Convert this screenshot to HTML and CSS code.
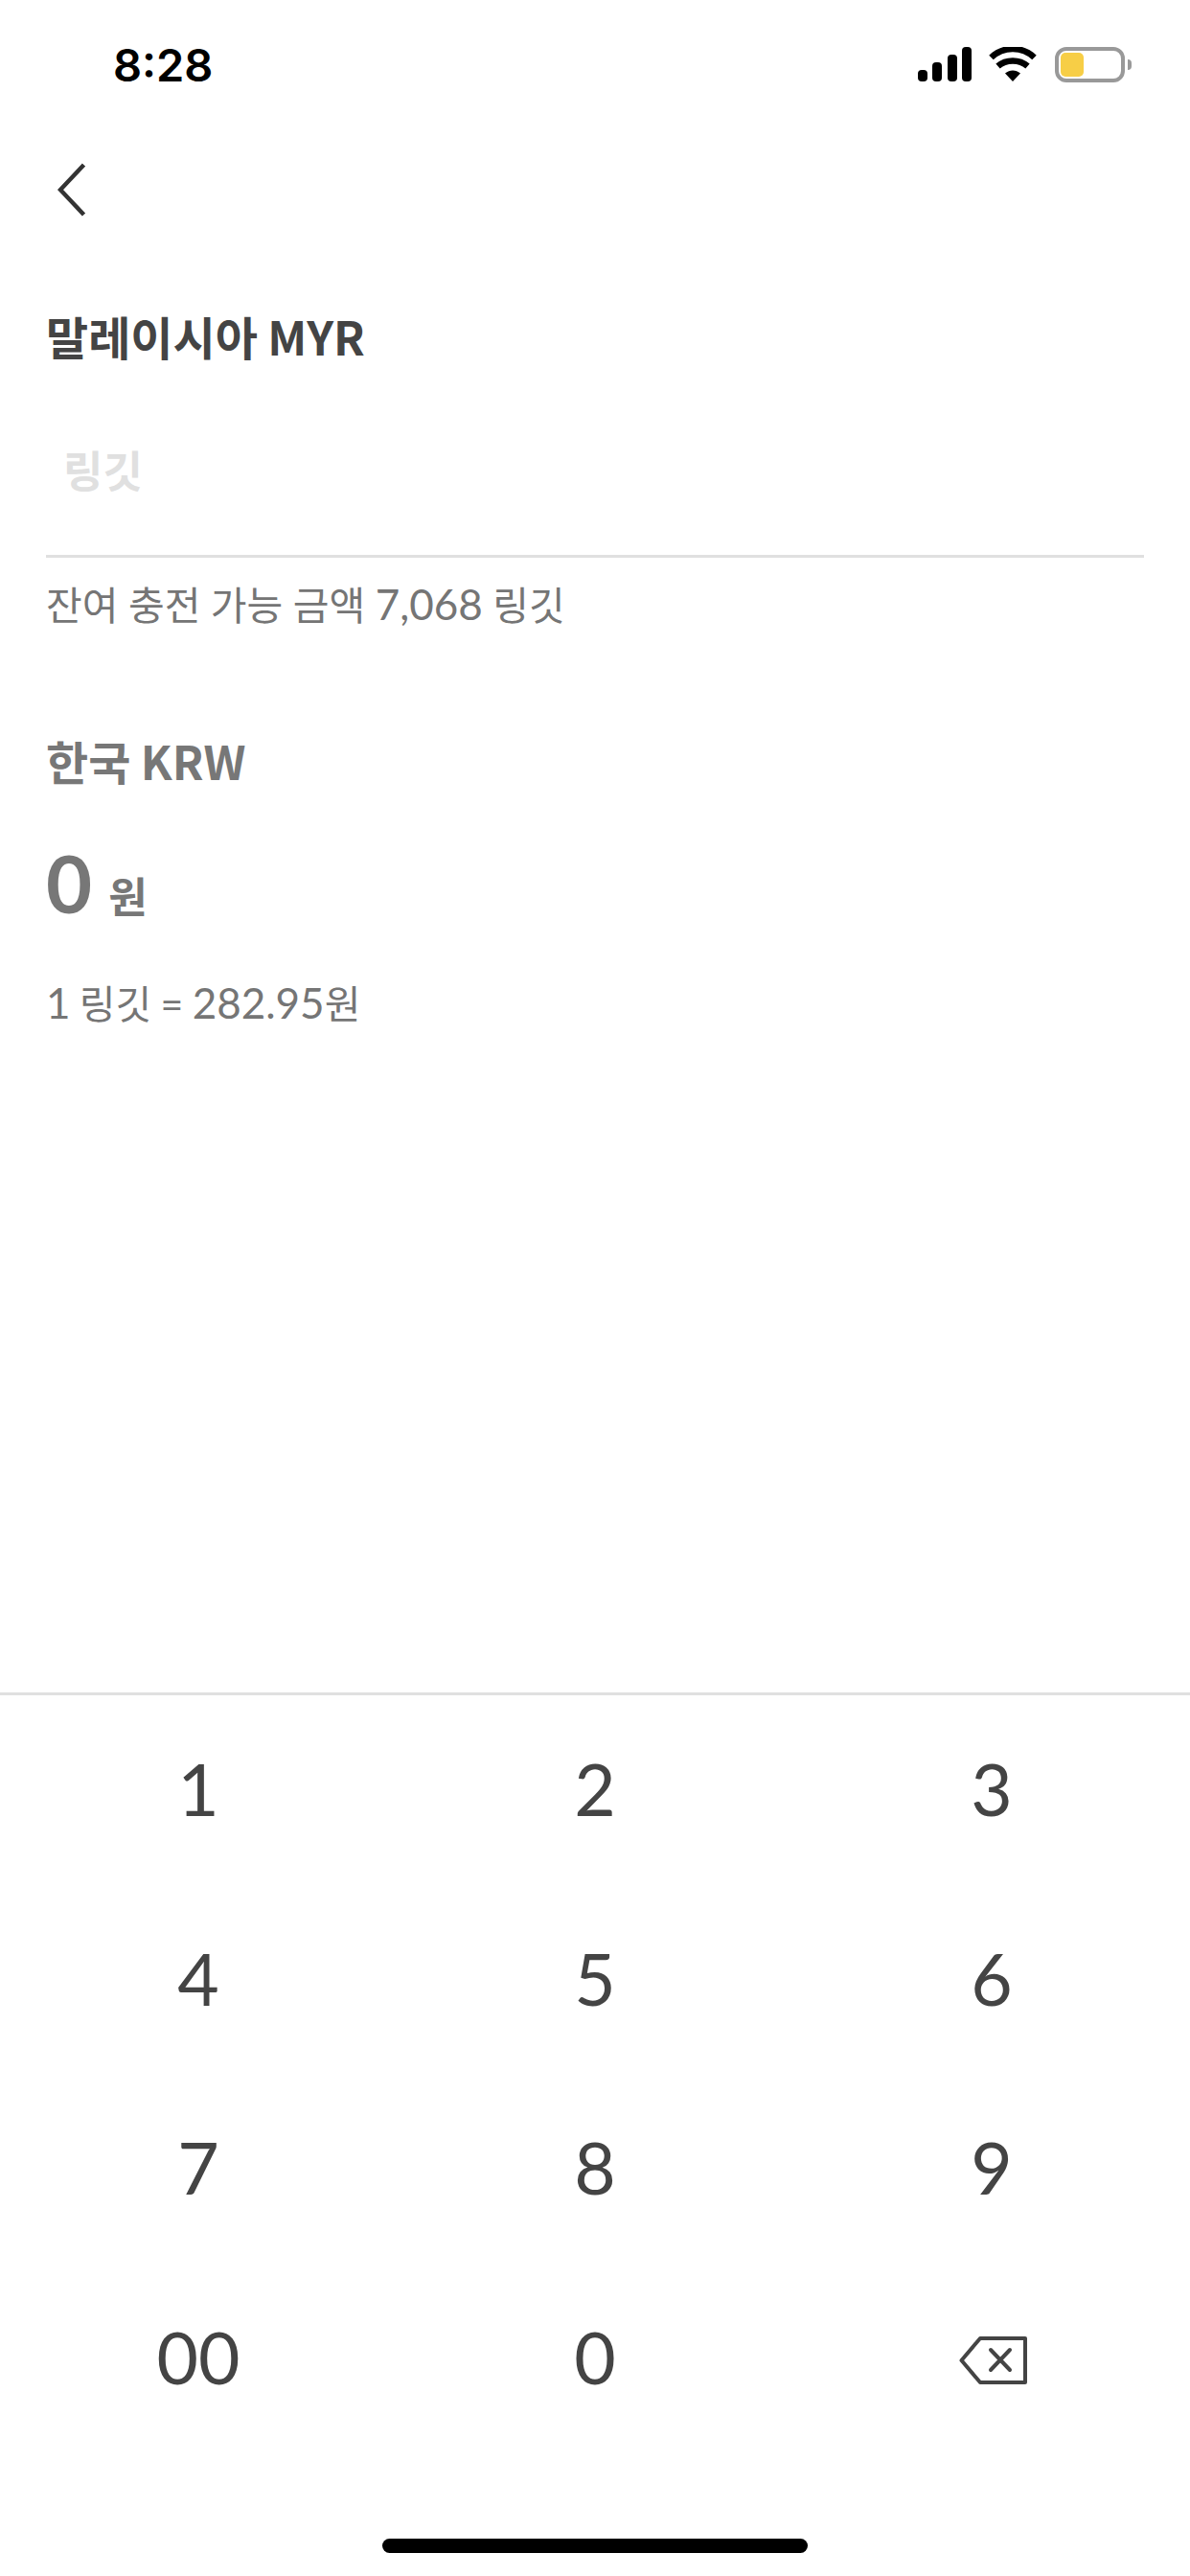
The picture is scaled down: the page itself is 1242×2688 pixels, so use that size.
FILE: index.html
```html
<!DOCTYPE html>
<html lang="ko">
<head>
    <meta charset="UTF-8">
    <meta name="viewport" content="width=device-width, initial-scale=1.0">
    <title>환전</title>
    <link rel="stylesheet" href="styles.css">
</head>
<body>
    <div class="screen">
        <div class="status-bar">
            <span class="time">8:28</span>
            <div class="status-icons">
                <svg class="signal" width="56" height="36" viewBox="0 0 56 36">
                    <rect x="0" y="24" width="10" height="12" rx="4" />
                    <rect x="15" y="16" width="10" height="20" rx="4" />
                    <rect x="31" y="8" width="10" height="28" rx="4" />
                    <rect x="46" y="0" width="10" height="36" rx="4" />
                </svg>
                <svg class="wifi" width="50" height="36" viewBox="0 0 50 36">
                    <path d="M25 36 L17 27.5 C22 23.5 28 23.5 33 27.5 Z" />
                    <path d="M9.5 20 C18 12.5 32 12.5 40.5 20" fill="none" stroke="#000" stroke-width="6.5" />
                    <path d="M2.5 11 C15 -1 35 -1 47.5 11" fill="none" stroke="#000" stroke-width="6.5" />
                </svg>
                <div class="battery">
                    <div class="battery-body"><div class="battery-fill"></div></div>
                    <div class="battery-tip"></div>
                </div>
            </div>
        </div>

        <div class="nav">
            <svg width="32" height="56" viewBox="0 0 32 56">
                <path d="M27.5 2 L3 28 L27.5 54" fill="none" stroke="#333" stroke-width="4.5" />
            </svg>
        </div>

        <div class="content">
            <h2 class="title">말레이시아 MYR</h2>
            <div class="amount-input">링깃</div>
            <p class="note limit-note">잔여 충전 가능 금액 <span class="note-num">7,068</span> 링깃</p>

            <h2 class="title title-muted">한국 KRW</h2>
            <div class="result"><span class="result-num">0</span><span class="result-unit">원</span></div>
            <p class="note rate-note"><span class="note-num">1</span> 링깃 = <span class="note-num">282.95</span>원</p>
        </div>

        <div class="keypad">
            <div class="key">1</div>
            <div class="key">2</div>
            <div class="key">3</div>
            <div class="key">4</div>
            <div class="key">5</div>
            <div class="key">6</div>
            <div class="key">7</div>
            <div class="key">8</div>
            <div class="key">9</div>
            <div class="key">00</div>
            <div class="key">0</div>
            <div class="key">
                <svg class="key-delete" width="72" height="50" viewBox="0 0 72 50">
                    <path d="M2.5 25 L22 2 H69 V48 H22 Z" fill="none" stroke="#444" stroke-width="4" stroke-linejoin="round" />
                    <path d="M33 14 L53 35 M53 14 L33 35" fill="none" stroke="#444" stroke-width="4" stroke-linecap="round" />
                </svg>
            </div>
        </div>

        <div class="home-bar"><div class="home-indicator"></div></div>
    </div>
</body>
</html>
```

FILE: styles.css
```css
body {
    margin: 0;
    background-color: #fff;
    font-family: "Lato", "Noto Sans CJK KR", sans-serif;
}

.screen {
    display: flex;
    flex-direction: column;
    width: 1242px;
    height: 2688px;
    overflow: hidden;
}

.status-bar {
    display: flex;
    justify-content: space-between;
    align-items: center;
    height: 36px;
    padding: 49px 57px 0 118px;
}

.time {
    font-family: "Inter", sans-serif;
    font-size: 47px;
    font-weight: 600;
    color: #000;
}

.status-icons {
    display: flex;
    align-items: center;
}

.wifi {
    margin-left: 18px;
}

.battery {
    display: flex;
    align-items: center;
    margin-left: 19px;
    margin-right: 4px;
}

.battery-body {
    box-sizing: border-box;
    width: 73px;
    height: 37px;
    padding: 2px;
    border: 4px solid #999;
    border-radius: 12px;
}

.battery-fill {
    width: 24px;
    height: 100%;
    background-color: #f7ce46;
    border-radius: 5px;
}

.battery-tip {
    width: 4px;
    height: 11px;
    margin-left: 3px;
    background-color: #999;
    border-radius: 0 6px 6px 0;
}

.nav {
    display: flex;
    padding: 85px 0 0 60px;
    height: 56px;
}

.content {
    flex: 1;
    padding: 0 48px;
}

.title {
    margin: 0;
    font-family: "Noto Sans CJK KR", sans-serif;
    font-size: 48px;
    line-height: 60px;
    font-weight: 700;
    word-spacing: -3px;
    color: #444;
}

.content > .title:first-child {
    margin-top: 94px;
}

.title-muted {
    margin-top: 101px;
    color: #777;
}

.amount-input {
    height: 119px;
    padding-left: 18px;
    margin-top: 80px;
    border-bottom: 3px solid #e0e0e0;
    font-size: 45px;
    line-height: 64px;
    font-weight: 700;
    color: #e0e0e0;
}

.note {
    margin: 0;
    font-size: 41px;
    line-height: 60px;
    color: #757575;
}

.note-num {
    font-size: 44px;
}

.limit-note {
    margin-top: 18px;
}

.result {
    display: flex;
    align-items: baseline;
    margin-top: 48px;
    color: #777;
    font-weight: 700;
    line-height: 100px;
}

.result-num {
    font-size: 83px;
}

.result-unit {
    margin-left: 17px;
    font-size: 44px;
}

.rate-note {
    margin-top: 30px;
    word-spacing: -1.2px;
}

.keypad {
    display: grid;
    grid-template-columns: repeat(3, 414px);
    grid-auto-rows: 197.6px;
    align-content: start;
    box-sizing: border-box;
    height: 883px;
    border-top: 3px solid #e0e0e0;
}

.key {
    display: flex;
    justify-content: center;
    align-items: center;
    height: 194px;
    font-size: 75px;
    color: #444;
}

.key-delete {
    margin: 8px 0 0 3px;
}

.home-bar {
    display: flex;
    justify-content: center;
    height: 39px;
}

.home-indicator {
    width: 444px;
    height: 15px;
    background-color: #000;
    border-radius: 8px;
}
```
